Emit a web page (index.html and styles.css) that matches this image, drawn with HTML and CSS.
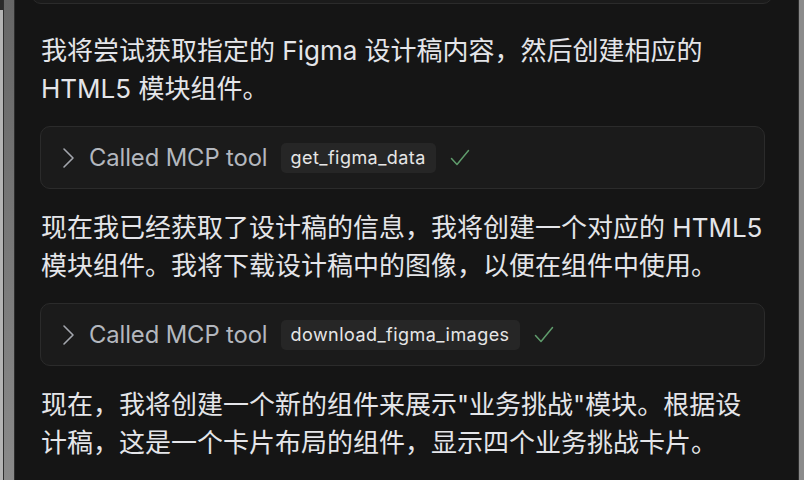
FILE: index.html
```html
<!DOCTYPE html>
<html lang="zh-CN">
<head>
<meta charset="utf-8">
<title>Chat</title>
<link rel="stylesheet" href="styles.css">
</head>
<body>
<div class="frame">
  <div class="edge-left">
    <div class="edge-outer"></div>
    <div class="edge-line"></div>
    <div class="edge-band"></div>
    <div class="edge-line"></div>
  </div>
  <main class="chat">
    <div class="prev-card"></div>
    <p class="msg">我将尝试获取指定的 Figma 设计稿内容，然后创建相应的 HTML5 模块组件。</p>
    <div class="tool">
      <svg class="chev" width="14" height="22" viewBox="0 0 14 22"><path d="M2 2 L11 11 L2 20" fill="none" stroke="#a3a6ad" stroke-width="1.6" stroke-linecap="round" stroke-linejoin="round"/></svg>
      <span class="tool-label">Called MCP tool</span>
      <span class="chip">get_figma_data</span>
      <svg class="check" width="20" height="18" viewBox="0 0 20 18"><path d="M1.5 9.5 L7 15.5 L18.5 1.5" fill="none" stroke="#5f9c6c" stroke-width="1.5" stroke-linecap="round" stroke-linejoin="round"/></svg>
    </div>
    <p class="msg">现在我已经获取了设计稿的信息，我将创建一个对应的 HTML5 模块组件。我将下载设计稿中的图像，以便在组件中使用。</p>
    <div class="tool">
      <svg class="chev" width="14" height="22" viewBox="0 0 14 22"><path d="M2 2 L11 11 L2 20" fill="none" stroke="#a3a6ad" stroke-width="1.6" stroke-linecap="round" stroke-linejoin="round"/></svg>
      <span class="tool-label">Called MCP tool</span>
      <span class="chip">download_figma_images</span>
      <svg class="check" width="20" height="18" viewBox="0 0 20 18"><path d="M1.5 9.5 L7 15.5 L18.5 1.5" fill="none" stroke="#5f9c6c" stroke-width="1.5" stroke-linecap="round" stroke-linejoin="round"/></svg>
    </div>
    <p class="msg">现在，我将创建一个新的组件来展示"业务挑战"模块。根据设计稿，这是一个卡片布局的组件，显示四个业务挑战卡片。</p>
  </main>
  <div class="edge-right">
    <div class="edge-line"></div>
    <div class="edge-band-r"></div>
  </div>
</div>
</body>
</html>
```

FILE: styles.css
```css
* { box-sizing: border-box; }
html, body {
  margin: 0;
  padding: 0;
  width: 804px;
  height: 480px;
  overflow: hidden;
  background: #151515;
}
.frame {
  display: flex;
  width: 804px;
  height: 480px;
}
.edge-left {
  display: flex;
  flex: 0 0 15px;
}
.edge-outer {
  width: 3px;
  background: linear-gradient(#2a2a2a 0 10px, #b4b4b4 10px);
}
.edge-line {
  width: 1px;
  background: #2e2e2e;
}
.edge-band {
  width: 10px;
  background: linear-gradient(#666666, #8a8a8a);
}
.edge-right {
  display: flex;
  flex: 0 0 6px;
}
.edge-band-r {
  flex: 1;
  background: #8b8b8b;
}
.chat {
  flex: 1;
  padding: 0 33px 0 25px;
  font-family: Inter, "Noto Sans CJK SC", sans-serif;
  color: #e4e5e9;
  overflow: hidden;
}
.prev-card {
  height: 40px;
  margin: -36px -8px 0 -9px;
  border: 1.5px solid #2b2b2b;
  border-radius: 10px;
  background: #1b1b1b;
}
.msg {
  margin: 0;
  padding: 0 0 0 1px;
  font-size: 26px;
  line-height: 38px;
}
.prev-card + .msg { margin-top: 28px; }
.tool {
  display: flex;
  align-items: center;
  height: 63px;
  margin: 18px 0 20px;
  padding: 0 20px 0 21px;
  border: 1.5px solid #2b2b2b;
  border-radius: 10px;
  background: #1b1b1b;
}
.chev { flex: 0 0 auto; margin-right: 13px; }
.tool-label {
  font-size: 23.8px;
  color: #b3b7be;
  margin-right: 13px;
  letter-spacing: -0.1px;
}
.chip {
  font-size: 18px;
  color: #e6e6e6;
  background: #262626;
  border-radius: 5px;
  padding: 4px 10px 4px;
  line-height: 22px;
  letter-spacing: 0.45px;
}
.check { margin-left: 14px; }
```
